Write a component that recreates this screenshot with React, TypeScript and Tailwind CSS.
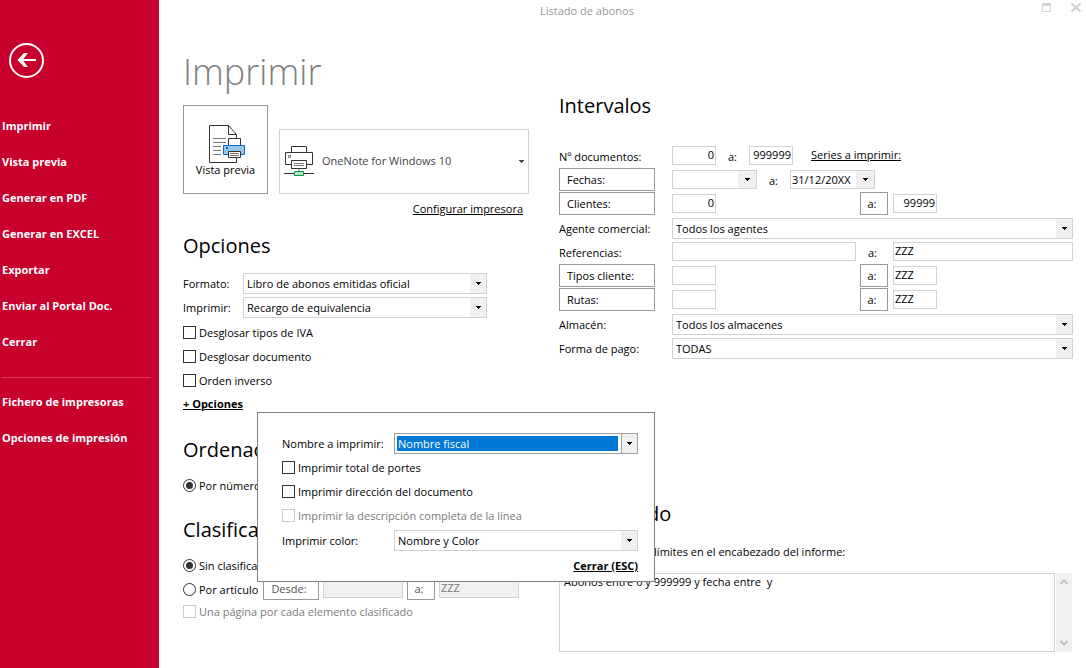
import React from 'react';
import clsx from 'clsx';

const mainActions = [
  'Imprimir',
  'Vista previa',
  'Generar en PDF',
  'Generar en EXCEL',
  'Exportar',
  'Enviar al Portal Doc.',
  'Cerrar',
];
const setupActions = ['Fichero de impresoras', 'Opciones de impresión'];

function Caret() {
  return (
    <svg width="5" height="3" viewBox="0 0 5 3" shapeRendering="crispEdges" aria-hidden="true">
      <path d="M0 0h5v1H4v1H3v1H2V2H1V1H0z" fill="currentColor" />
    </svg>
  );
}

function BackIcon() {
  return (
    <svg width="36" height="36" viewBox="0 0 36 36" fill="none" stroke="#fff" aria-hidden="true">
      <circle cx="17.5" cy="17.5" r="16.5" strokeWidth="2" />
      <path d="M27 17H11" strokeWidth="2" />
      <path d="M15 10h4l-5.500 7 5.500 7h-4l-6.500-7z" fill="#fff" stroke="none" />
    </svg>
  );
}

function PreviewIcon() {
  return (
    <svg className="ml-[3px]" width="38" height="40" viewBox="0 0 38 40" fill="#fff" stroke="#333" aria-hidden="true">
      <path d="M1.500 1.500h19l8 9v28h-27z" />
      <path d="M20.500 1.500v9h8" fill="none" />
      <path d="M5 14.500h13M5 18.500h13M5 22.500h8M5 26.500h8M5 30.500h8" stroke="#777" />
      <path d="M20.500 14.500h12v8h-12z" />
      <path d="M15.500 21.500h21v9h-21z" fill="#92c7ee" stroke="#0f69b4" />
      <path d="M18 23h2v2h-2z" fill="#0f69b4" stroke="none" />
      <path d="M20.500 27.500h12v6h-12z" />
      <path d="M22 29.500h9M22 31.500h9" stroke="#777" />
    </svg>
  );
}

function PrinterIcon() {
  return (
    <svg width="30" height="31" viewBox="0 0 30 31" fill="#fff" stroke="#333" aria-hidden="true">
      <path d="M7.500 .5h15v6h-15z" />
      <path d="M1.500 6.500h27v12h-27z" />
      <path d="M4.500 9.500h2v2h-2z" stroke="#777" />
      <path d="M7.500 14.500h15v8h-15z" />
      <path d="M10 17.500h10M10 19.500h10" stroke="#777" />
      <path d="M15 23v3" stroke="#bbb" strokeWidth="2" />
      <path d="M0 27.500h30" />
      <path d="M10.500 25.500h9v4h-9z" fill="#b5dfbd" stroke="#109a48" />
    </svg>
  );
}

interface ComboProps {
  id: string;
  value: string;
  label?: string;
  className?: string;
  focused?: boolean;
}

function Combo({ id, value, label, className, focused }: ComboProps) {
  return (
    <div
      className={clsx(
        'relative mt-0.5 h-[21px] border bg-white',
        focused ? 'border-[#a0a0a0] py-0.5 pr-[19px] pl-0.5' : 'border-[#d2d2d2]',
        className,
      )}
    >
      <select
        id={id}
        aria-label={label}
        className={clsx(
          'block h-full w-full appearance-none outline-none',
          focused ? 'bg-[#0078d7] pl-px text-white' : 'pt-px pr-4 pl-[3px]',
        )}
      >
        <option>{value}</option>
      </select>
      <span
        className={clsx(
          'pointer-events-none absolute inset-y-0 right-0 flex w-4 items-center justify-center bg-[#f0f0f0]',
          focused && 'border-l border-[#a0a0a0]',
        )}
      >
        <Caret />
      </span>
    </div>
  );
}

function DateBox({ label, value }: { label: string; value?: string }) {
  return (
    <div className="mt-0.5 flex h-[19px] w-[85px] border border-[#d2d2d2]">
      <input aria-label={label} defaultValue={value} className="w-0 flex-1 pt-px pl-px outline-none" />
      <button aria-label={`Abrir ${label}`} className="flex w-[18px] items-center justify-center bg-[#f0f0f0]">
        <Caret />
      </button>
    </div>
  );
}

interface FieldProps {
  label: string;
  value?: string;
  className?: string;
  disabled?: boolean;
}

function Field({ label, value, className = 'w-11', disabled }: FieldProps) {
  return (
    <input
      aria-label={label}
      defaultValue={value}
      disabled={disabled}
      className={clsx(
        'mt-0.5 h-[19px] border border-[#d2d2d2] px-px pb-0.5 outline-none',
        disabled && 'bg-[#f0f0f0] text-[#7a7a7a]',
        className,
      )}
    />
  );
}

function PushButton({ children, className }: { children: React.ReactNode; className?: string }) {
  return (
    <button className={clsx('h-[23px] border border-[#999] bg-white pt-0.5', className)}>{children}</button>
  );
}

interface TickProps {
  type?: 'checkbox' | 'radio';
  name?: string;
  label: string;
  checked?: boolean;
  disabled?: boolean;
}

function Tick({ type = 'checkbox', name, label, checked, disabled }: TickProps) {
  return (
    <label className={clsx('flex h-6 items-start gap-[3px] whitespace-nowrap', disabled && 'text-[#7a7a7a]')}>
      <input
        type={type}
        name={name}
        defaultChecked={checked}
        disabled={disabled}
        className={clsx(
          'mt-1.5 size-[13px] shrink-0 appearance-none border bg-white',
          disabled ? 'border-[#ccc]' : 'border-[#333]',
          type === 'radio' && 'rounded-full p-0.5 checked:bg-[#333] checked:bg-clip-content',
        )}
      />
      <span className="leading-[26px]">{label}</span>
    </label>
  );
}

function Heading({ children, className }: { children: React.ReactNode; className?: string }) {
  return <h2 className={clsx('text-[20px] leading-7', className)}>{children}</h2>;
}

interface RangeRowProps {
  label: string;
  button?: boolean;
  children: React.ReactNode;
}

function RangeRow({ label, button, children }: RangeRowProps) {
  return (
    <div className="flex h-6 items-start">
      <div className="w-[113px] shrink-0">
        {button ? (
          <PushButton className="w-24 pl-[7px] text-left">{label}</PushButton>
        ) : (
          <span className="leading-[26px]">{label}</span>
        )}
      </div>
      {children}
    </div>
  );
}

function OptionsPopup() {
  return (
    <div
      role="dialog"
      aria-label="Opciones"
      className="absolute top-5 left-[74px] z-10 h-[170px] w-[398px] border border-[#808080] bg-white pt-[18px] pr-4 pl-6"
    >
      <div className="flex h-6">
        <label htmlFor="nombre" className="w-28 leading-[26px]">Nombre a imprimir:</label>
        <Combo id="nombre" value="Nombre fiscal" className="flex-1" focused />
      </div>
      <Tick label="Imprimir total de portes" />
      <Tick label="Imprimir dirección del documento" />
      <Tick label="Imprimir la descripción completa de la línea" disabled />
      <div className="mt-px flex h-6">
        <label htmlFor="color" className="w-28 leading-[26px]">Imprimir color:</label>
        <Combo id="color" value="Nombre y Color" className="flex-1" />
      </div>
      <div className="mt-0.5 text-right">
        <button className="font-bold leading-6 underline">Cerrar (ESC)</button>
      </div>
    </div>
  );
}

function Sidebar() {
  return (
    <nav className="w-[159px] shrink-0 bg-[#c8002d] font-bold text-white">
      <button aria-label="Volver" className="mt-[43px] mb-[29px] ml-[9px] block">
        <BackIcon />
      </button>
      {mainActions.map((action) => (
        <button key={action} className="block h-9 w-full pl-0.5 text-left">{action}</button>
      ))}
      <hr className="mt-[17px] mr-2 mb-1.5 ml-px border-[#e0395a]" />
      {setupActions.map((action) => (
        <button key={action} className="block h-9 w-full pl-0.5 text-left">{action}</button>
      ))}
    </nav>
  );
}

function PrintColumn() {
  return (
    <div className="w-[346px] shrink-0">
      <h1 className="h-[53px] text-[36px] leading-[40px] font-light text-[#808080]">Imprimir</h1>
      <div className="flex items-end justify-between">
        <button className="flex h-[89px] w-[85px] flex-col items-center border border-[#999] pt-[18px]">
          <PreviewIcon />
          <span className="leading-3">Vista previa</span>
        </button>
        <button className="flex h-[65px] w-[250px] items-center border border-[#d2d2d2] pr-1 pb-px pl-1 text-[#444]">
          <PrinterIcon />
          <span className="ml-2 flex-1 text-left">OneNote for Windows 10</span>
          <Caret />
        </button>
      </div>
      <div className="pt-[3px] pr-1.5 text-right leading-6">
        <a href="#impresora" className="underline">Configurar impresora</a>
      </div>

      <Heading className="mt-[11px] mb-[11px]">Opciones</Heading>
      <div className="flex h-6">
        <label htmlFor="formato" className="w-[60px] leading-[26px]">Formato:</label>
        <Combo id="formato" value="Libro de abonos emitidas oficial" className="w-[244px]" />
      </div>
      <div className="mb-px flex h-6">
        <label htmlFor="imprimir" className="w-[60px] leading-[26px]">Imprimir:</label>
        <Combo id="imprimir" value="Recargo de equivalencia" className="w-[244px]" />
      </div>
      <Tick label="Desglosar tipos de IVA" />
      <Tick label="Desglosar documento" />
      <Tick label="Orden inverso" />
      <div className="relative h-6">
        <button className="font-bold leading-6 underline">+ Opciones</button>
        <OptionsPopup />
      </div>

      <Heading className="mt-5 mb-[9px]">Ordenación</Heading>
      <Tick type="radio" name="orden" label="Por número" checked />

      <Heading className="mt-[19px] mb-[9px]">Clasificación</Heading>
      <Tick type="radio" name="clase" label="Sin clasificar" checked />
      <div className="flex h-[22px] gap-1">
        <div className="w-[76px]">
          <Tick type="radio" name="clase" label="Por artículo" />
        </div>
        <PushButton className="w-14 pr-1 text-[#555]">Desde:</PushButton>
        <Field label="Desde artículo" className="w-20" disabled />
        <PushButton className="w-7 pr-1 text-[#555]">a:</PushButton>
        <Field label="Hasta artículo" value="ZZZ" className="w-20" disabled />
      </div>
      <Tick label="Una página por cada elemento clasificado" disabled />
    </div>
  );
}

function RangesColumn() {
  return (
    <div className="min-w-0 flex-1 pt-10">
      <Heading className="mb-6">Intervalos</Heading>
      <RangeRow label="Nº documentos:">
        <Field label="Desde documento" value="0" className="w-11 text-right" />
        <span className="w-[33px] pl-3 leading-[26px]">a:</span>
        <Field label="Hasta documento" value="999999" className="w-11 text-right" />
        <a href="#series" className="ml-[18px] leading-[22px] underline">Series a imprimir:</a>
      </RangeRow>
      <RangeRow label="Fechas:" button>
        <DateBox label="fecha inicial" />
        <span className="w-[33px] pl-3 leading-[26px]">a:</span>
        <DateBox label="fecha final" value="31/12/20XX" />
      </RangeRow>
      <RangeRow label="Clientes:" button>
        <div className="w-[188px]">
          <Field label="Desde cliente" value="0" className="w-11 text-right" />
        </div>
        <PushButton className="mr-[5px] w-7 pr-1">a:</PushButton>
        <Field label="Hasta cliente" value="99999" className="w-11 text-right" />
      </RangeRow>
      <RangeRow label="Agente comercial:">
        <Combo id="agente" label="Agente comercial" value="Todos los agentes" className="flex-1" />
      </RangeRow>
      <RangeRow label="Referencias:">
        <Field label="Desde referencia" className="w-[184px]" />
        <span className="w-[37px] pl-3 leading-[26px]">a:</span>
        <Field label="Hasta referencia" value="ZZZ" className="w-0 flex-1" />
      </RangeRow>
      {['Tipos cliente', 'Rutas'].map((name) => (
        <RangeRow key={name} label={`${name}:`} button>
          <div className="w-[188px]">
            <Field label={`Desde ${name}`} />
          </div>
          <PushButton className="mr-[5px] w-7 pr-1">a:</PushButton>
          <Field label={`Hasta ${name}`} value="ZZZ" />
        </RangeRow>
      ))}
      <RangeRow label="Almacén:">
        <Combo id="almacen" label="Almacén" value="Todos los almacenes" className="flex-1" />
      </RangeRow>
      <RangeRow label="Forma de pago:">
        <Combo id="pago" label="Forma de pago" value="TODAS" className="flex-1" />
      </RangeRow>

      <Heading className="mt-[140px] mb-3">Encabezado</Heading>
      <label htmlFor="encabezado" className="block leading-6">
        Texto que lista los límites en el encabezado del informe:
      </label>
      <div className="mt-[9px] flex h-[79px] gap-px pr-px">
        <textarea
          id="encabezado"
          defaultValue="Abonos entre 0 y 999999 y fecha entre  y"
          className="flex-1 resize-none overflow-hidden border border-[#d2d2d2] pl-1 leading-4 outline-none"
        />
        <div className="flex w-4 flex-col items-center justify-between bg-[#f0f0f0] py-1.5 text-[#bfbfbf]">
          <svg width="8" height="6" viewBox="0 0 8 6" fill="none" stroke="currentColor" strokeWidth="2">
            <path d="M.5 5 4 1.500 7.500 5" />
          </svg>
          <svg width="8" height="6" viewBox="0 0 8 6" fill="none" stroke="currentColor" strokeWidth="2">
            <path d="M.5 1 4 4.500 7.500 1" />
          </svg>
        </div>
      </div>
    </div>
  );
}

export default function App() {
  return (
    <div className="flex min-h-screen bg-white font-['Open_Sans','Noto_Sans',sans-serif] text-[11px] text-black">
      <Sidebar />
      <main className="flex min-w-0 flex-1 flex-col">
        <header className="flex h-[22px] items-start text-[#999]">
          <span className="flex-1 text-center leading-[22px]">Listado de abonos</span>
          <div className="flex w-[71px] justify-end gap-5 pt-[3px] pr-[5px] text-[#d2d2d2]">
            <button aria-label="Maximizar">
              <svg width="9" height="9" viewBox="0 0 9 9" fill="none" stroke="currentColor">
                <path d="M.5 .5h8v8h-8zM0 1.500h9M0 2.500h9" />
              </svg>
            </button>
            <button aria-label="Cerrar ventana">
              <svg width="10" height="9" viewBox="0 0 10 9" stroke="currentColor" strokeWidth="2">
                <path d="M.5 .5l9 8M9.500 .5l-9 8" />
              </svg>
            </button>
          </div>
        </header>
        <div className="flex gap-[30px] pt-[30px] pr-[13px] pl-6">
          <PrintColumn />
          <RangesColumn />
        </div>
      </main>
    </div>
  );
}
